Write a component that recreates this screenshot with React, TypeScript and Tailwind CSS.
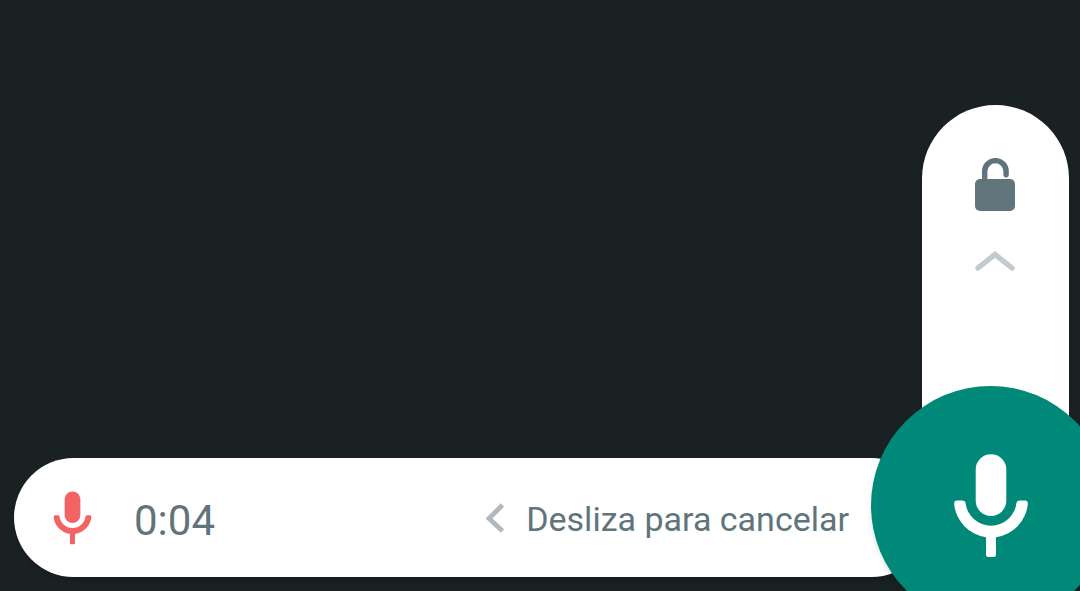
import React from "react";

interface IconProps {
  className?: string;
}

const MicIcon: React.FC<IconProps> = ({ className }) => (
  <svg viewBox="0 0 76 106" fill="currentColor" className={className} aria-hidden="true">
    <rect x="22.7" y="1.3" width="30.6" height="61.6" rx="15.3" />
    <path d="M4 47.5H9Q12.3 47.5 12.6 50.3A25.6 25.6 0 0 0 63.4 50.3Q63.7 47.5 67 47.5H72Q75 47.5 74.8 51.2A37 37 0 0 1 43 84.2V101.5Q43 104 40.5 104H35.5Q33 104 33 101.5V84.2A37 37 0 0 1 1.2 51.2Q1 47.5 4 47.5Z" />
  </svg>
);

const OpenLockIcon: React.FC<IconProps> = ({ className }) => (
  <svg viewBox="0 0 40 53" className={className} aria-hidden="true">
    <rect x="0" y="21" width="40" height="32" rx="5" fill="currentColor" />
    <path
      d="M9.7 23V13.3A10.7 10.7 0 0 1 31.1 13.3V16.8"
      fill="none"
      stroke="currentColor"
      strokeWidth="5.4"
      strokeLinecap="round"
    />
  </svg>
);

const App: React.FC = () => {
  return (
    <main className="flex min-h-screen flex-col justify-end overflow-hidden bg-[#1a2122] font-['Roboto',sans-serif] text-[#60747c]">
      <div className="relative pb-[14px] pl-[14px] pr-[149px]">
        {/* Recording bar */}
        <section className="flex h-[119px] items-center rounded-full bg-white pl-[39px] pr-[82px] shadow-md">
          <MicIcon className="h-14 w-[39px] shrink-0 text-[#f26464]" />
          <time className="ml-[42px] pt-1.5 text-[42px] leading-none">0:04</time>
          <button type="button" className="ml-auto flex items-center gap-5 whitespace-nowrap text-[34px] leading-none">
            <svg viewBox="0 0 20 30" className="h-[30px] w-5 text-[#b0babe]" aria-hidden="true">
              <path d="M16.5 2L3 15.5L16.5 28" fill="none" stroke="currentColor" strokeWidth="4.8" />
            </svg>
            <span className="pt-0.5">Desliza para cancelar</span>
          </button>
        </section>

        {/* Lock track and record button */}
        <div className="absolute -bottom-[34px] -right-[30px] w-[239px]">
          <button
            type="button"
            aria-label="Bloquear"
            className="ml-[51px] flex h-[361px] w-[147px] flex-col items-center gap-10 rounded-t-full bg-white pr-px pt-[53px] shadow-md"
          >
            <OpenLockIcon className="h-[53px] w-10 shrink-0" />
            <svg viewBox="0 0 40 20" className="h-5 w-10 shrink-0 text-[#c2cacd]" aria-hidden="true">
              <path d="M3 17L20 3.5L37 17" fill="none" stroke="currentColor" strokeWidth="5.4" strokeLinecap="round" />
            </svg>
          </button>
          <button
            type="button"
            aria-label="Grabar"
            className="relative -mt-20 flex size-[239px] items-center justify-center rounded-full bg-[#008979] text-white shadow-md"
          >
            <MicIcon className="h-[106px] w-[76px]" />
          </button>
        </div>
      </div>
    </main>
  );
};

export default App;
